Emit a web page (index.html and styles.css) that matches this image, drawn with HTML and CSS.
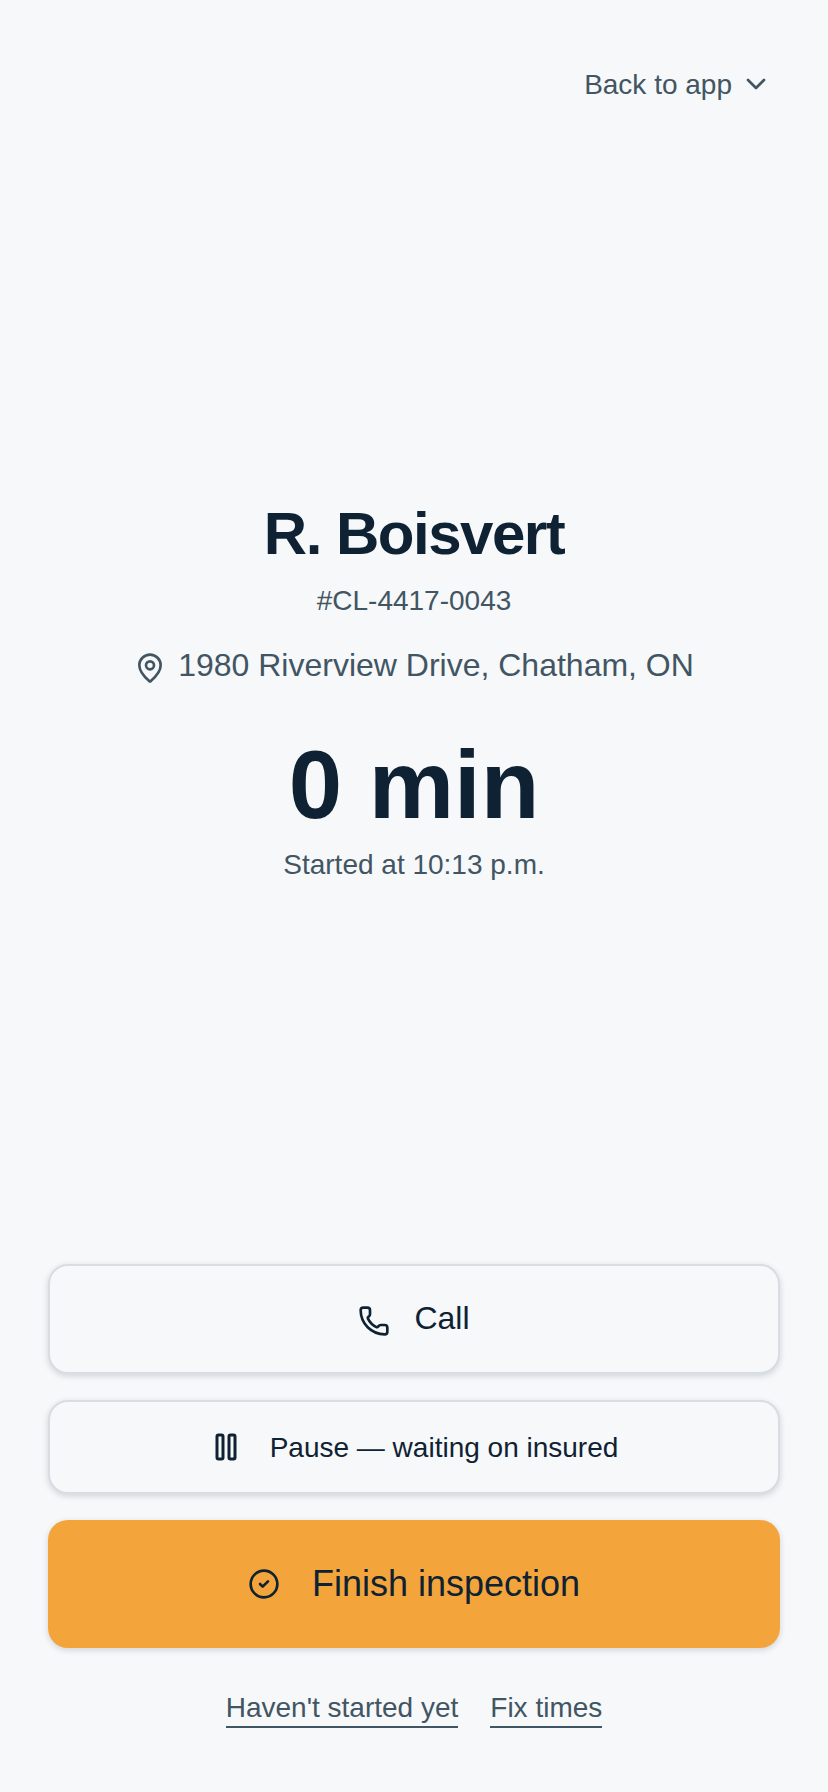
FILE: index.html
```html
<!DOCTYPE html>
<html lang="en">
<head>
<meta charset="utf-8">
<title>Inspection</title>
<link rel="stylesheet" href="styles.css">
</head>
<body>
<div class="page">
  <header class="top">
    <a class="back">Back to app
      <svg class="icon-chev" viewBox="0 0 24 24" fill="none" stroke="currentColor" stroke-width="2" stroke-linecap="round" stroke-linejoin="round"><path d="m6 9 6 6 6-6"/></svg>
    </a>
  </header>
  <main class="info">
    <h1 class="name">R. Boisvert</h1>
    <div class="claim">#CL-4417-0043</div>
    <div class="addr">
      <svg class="icon-pin" viewBox="0 0 24 24" fill="none" stroke="currentColor" stroke-width="2" stroke-linecap="round" stroke-linejoin="round"><path d="M20 10c0 4.993-5.539 10.193-7.399 11.799a1 1 0 0 1-1.202 0C9.539 20.193 4 14.993 4 10a8 8 0 0 1 16 0"/><circle cx="12" cy="10" r="3"/></svg>
      <span>1980 Riverview Drive, Chatham, ON</span>
    </div>
    <div class="timer">0 min</div>
    <div class="started">Started at 10:13 p.m.</div>
  </main>
  <section class="actions">
    <button class="btn btn-call">
      <svg class="icon" viewBox="0 0 24 24" fill="none" stroke="currentColor" stroke-width="2" stroke-linecap="round" stroke-linejoin="round"><path d="M13.832 16.568a1 1 0 0 0 1.213-.303l.355-.465A2 2 0 0 1 17 15h3a2 2 0 0 1 2 2v3a2 2 0 0 1-2 2A18 18 0 0 1 2 4a2 2 0 0 1 2-2h3a2 2 0 0 1 2 2v3a2 2 0 0 1-.8 1.6l-.468.351a1 1 0 0 0-.292 1.233 14 14 0 0 0 6.392 6.384"/></svg>
      <span>Call</span>
    </button>
    <button class="btn btn-pause">
      <svg class="icon" viewBox="0 0 24 24" fill="none" stroke="currentColor" stroke-width="2" stroke-linecap="round" stroke-linejoin="round"><rect x="14" y="4" width="4" height="16" rx="1"/><rect x="6" y="4" width="4" height="16" rx="1"/></svg>
      <span>Pause — waiting on insured</span>
    </button>
    <button class="btn btn-finish">
      <svg class="icon" viewBox="0 0 24 24" fill="none" stroke="currentColor" stroke-width="2" stroke-linecap="round" stroke-linejoin="round"><circle cx="12" cy="12" r="10"/><path d="m9 12 2 2 4-4"/></svg>
      <span>Finish inspection</span>
    </button>
  </section>
  <nav class="links">
    <a class="link">Haven't started yet</a>
    <a class="link">Fix times</a>
  </nav>
</div>
</body>
</html>
```
FILE: styles.css
```css
* { box-sizing: border-box; }
html, body { margin: 0; padding: 0; }
body {
  background: #f6f8fa;
  color: #0f2233;
  font-family: "Liberation Sans", Arial, sans-serif;
}
.page {
  width: 828px;
  height: 1792px;
  display: flex;
  flex-direction: column;
  padding: 0 48px;
}
.top {
  display: flex;
  justify-content: flex-end;
  padding: 65px 8px 0 0;
  height: 502px;
}
.back {
  display: flex;
  align-items: center;
  gap: 8px;
  height: 40px;
  font-size: 28px;
  color: #425563;
}
.icon-chev { width: 32px; height: 32px; margin-top: -2px; }
.info {
  display: flex;
  flex-direction: column;
  align-items: center;
  flex: 1;
}
.name {
  margin: 0;
  font-size: 60px;
  line-height: 64px;
  font-weight: 700;
  letter-spacing: -1.5px;
  color: #0f2233;
}
.claim {
  margin-top: 17px;
  font-size: 28px;
  line-height: 36px;
  color: #425563;
}
.addr {
  margin-top: 26px;
  display: flex;
  align-items: center;
  gap: 12px;
  font-size: 32px;
  line-height: 40px;
  color: #425563;
}
.icon-pin { width: 32px; height: 32px; margin-top: 6px; }
.timer {
  margin-top: 48px;
  font-size: 96px;
  line-height: 104px;
  font-weight: 700;
  color: #0f2233;
}
.started {
  margin-top: 10px;
  font-size: 28px;
  line-height: 36px;
  color: #425563;
}
.actions {
  display: flex;
  flex-direction: column;
  gap: 26px;
}
.btn {
  display: flex;
  align-items: center;
  justify-content: center;
  width: 100%;
  border-radius: 20px;
  border: 2px solid #d8dde2;
  background: #f6f8fa;
  color: #0f2233;
  font-family: inherit;
  box-shadow: 0 2px 6px rgba(20, 30, 40, 0.16);
}
.btn-call { height: 110px; padding-bottom: 2px; font-size: 32px; gap: 24px; }
.btn-call .icon { width: 32px; height: 32px; margin-top: 5px; }
.btn-pause { height: 94px; padding-top: 2px; font-size: 28px; gap: 24px; }
.btn-pause .icon { width: 36px; height: 36px; margin-left: -2px; margin-right: 2px; margin-top: -2px; }
.btn-finish {
  height: 128px;
  font-size: 36px;
  gap: 32px;
  background: #f3a53c;
  border: 0;
}
.btn-finish .icon { width: 32px; height: 32px; }
.links {
  display: flex;
  justify-content: center;
  gap: 32px;
  margin-top: 40px;
  margin-bottom: 64px;
}
.link {
  font-size: 28px;
  line-height: 36px;
  padding-top: 2px;
  color: #425563;
  border-bottom: 2px solid #425563;
}
```
